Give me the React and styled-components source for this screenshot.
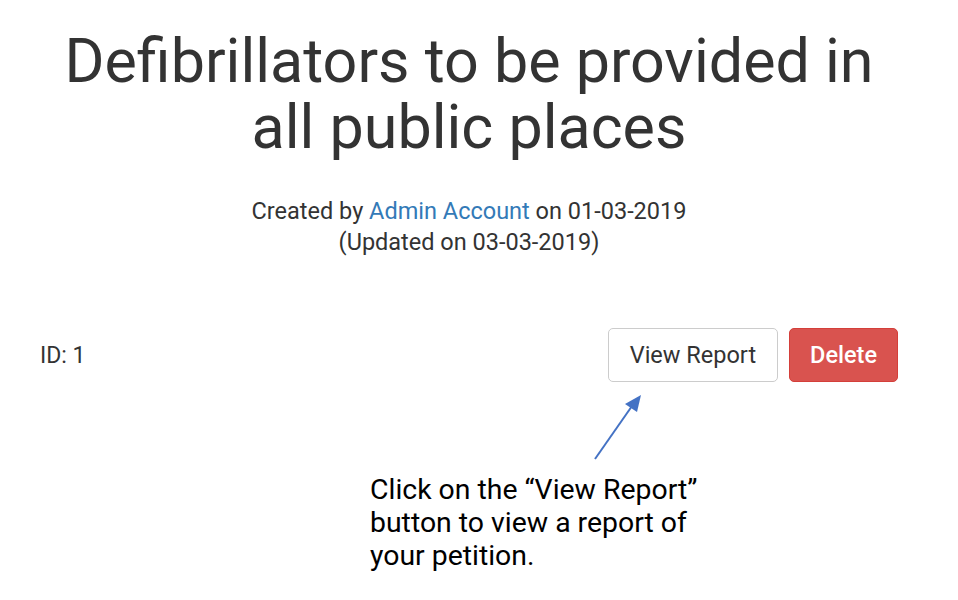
import React from "react";
import styled, { createGlobalStyle } from "styled-components";

const Global = createGlobalStyle`
  html, body { margin: 0; padding: 0; background: #fff; }
  body { font-family: Roboto, "Helvetica Neue", Arial, sans-serif; color: #333; }
`;

const Page = styled.div`
  width: 958px;
  height: 600px;
  box-sizing: border-box;
  padding: 0 60px 0 40px;
  overflow: hidden;
`;

const Title = styled.h1`
  margin: 0;
  padding-top: 28px;
  font-size: 61px;
  font-weight: 400;
  line-height: 66px;
  text-align: center;
  color: #333;
`;

const Meta = styled.p`
  margin: 36px 0 0;
  font-size: 23.5px;
  line-height: 31px;
  text-align: center;
  color: #333;
`;

const Link = styled.a`
  color: #337ab7;
  text-decoration: none;
`;

const ActionRow = styled.div`
  display: flex;
  align-items: center;
  justify-content: space-between;
  margin-top: 70px;
`;

const IdLabel = styled.span`
  font-size: 23px;
  color: #333;
`;

const Buttons = styled.div`
  display: flex;
  gap: 11px;
`;

const Button = styled.button`
  height: 54px;
  box-sizing: border-box;
  padding: 0 ${(p) => (p.$danger ? 20 : 21)}px;
  font-family: Roboto, "Helvetica Neue", Arial, sans-serif;
  font-size: 23.5px;
  border-radius: 5px;
  border: 1.5px solid ${(p) => (p.$danger ? "#d43f3a" : "#ccc")};
  background: ${(p) => (p.$danger ? "#d9534f" : "#fff")};
  color: ${(p) => (p.$danger ? "#fff" : "#333")};
  font-weight: ${(p) => (p.$danger ? 500 : 400)};
`;

const Annotation = styled.div`
  display: flex;
  flex-direction: column;
  padding-left: 330px;
`;

const Arrow = styled.svg`
  display: block;
  margin: 8px 0 0 220px;
`;

const Note = styled.p`
  margin: 11px 0 0;
  width: 340px;
  font-size: 28.4px;
  line-height: 33px;
  color: #000;
`;

export default function App() {
  return (
    <Page>
      <Global />
      <Title>
        Defibrillators to be provided in
        <br />
        all public places
      </Title>
      <Meta>
        Created by <Link href="#">Admin Account</Link> on 01-03-2019
        <br />
        (Updated on 03-03-2019)
      </Meta>
      <ActionRow>
        <IdLabel>ID: 1</IdLabel>
        <Buttons>
          <Button>View Report</Button>
          <Button $danger>Delete</Button>
        </Buttons>
      </ActionRow>
      <Annotation>
        <Arrow width="55" height="72" viewBox="0 0 55 72">
          <line x1="5" y1="69" x2="42" y2="16" stroke="#4472c4" strokeWidth="2" />
          <polygon points="51,5 35,14 47,22" fill="#4472c4" />
        </Arrow>
        <Note>
          Click on the “View Report” button to view a report of your petition.
        </Note>
      </Annotation>
    </Page>
  );
}
